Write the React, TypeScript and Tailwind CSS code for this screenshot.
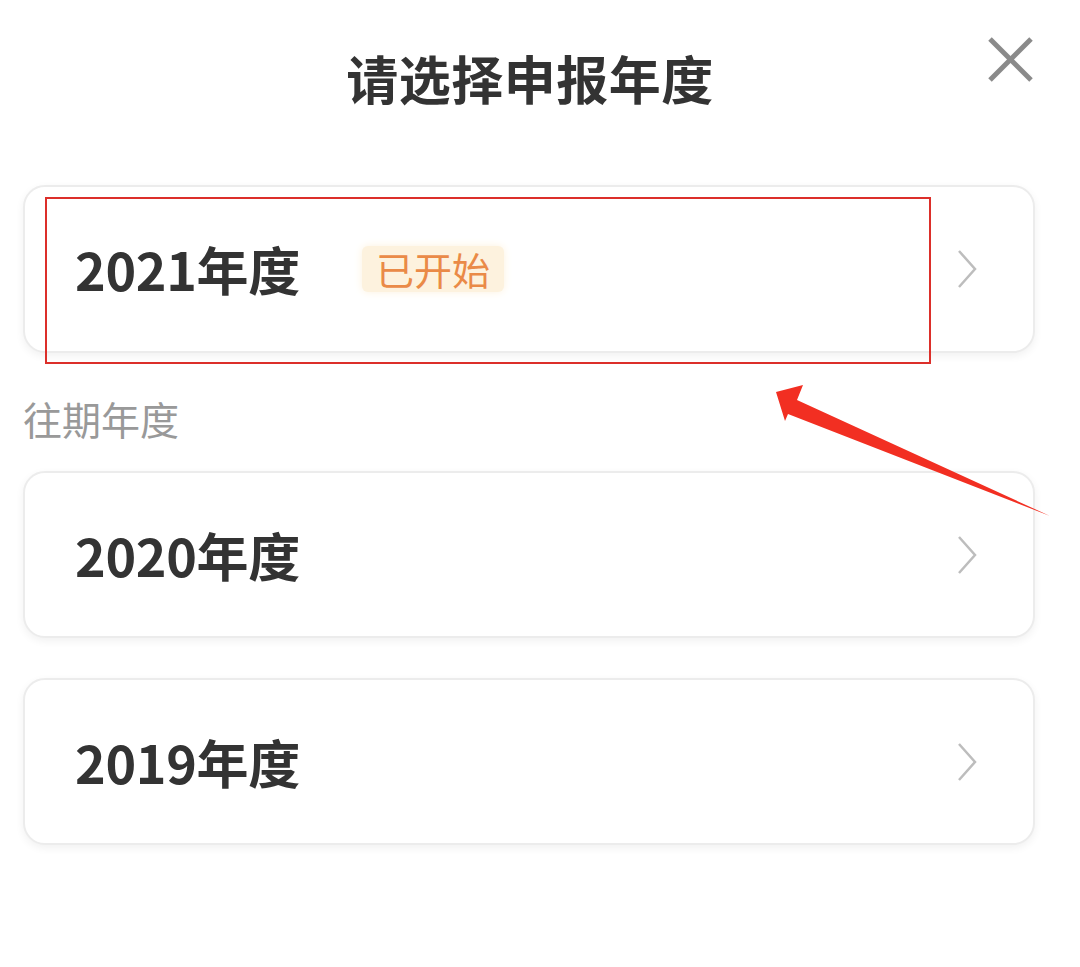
import React from "react";

const years = ["2020", "2019"];

function Chevron() {
  return (
    <svg width="20" height="40" viewBox="0 0 20 40" fill="none">
      <polyline points="2,2 18,20 2,38" stroke="#bdbdbd" strokeWidth="2.5" strokeLinejoin="miter" />
    </svg>
  );
}

function YearCard({ year, started, h }: { year: string; started?: boolean; h: string }) {
  return (
    <div
      className={`flex items-center justify-between w-[1012px] ${h} rounded-[22px] border-2 border-[#ececec] bg-white shadow-[0_3px_8px_rgba(0,0,0,0.06)] pl-[50px] pr-[56px]`}
    >
      <div className="flex items-center">
        <span className="text-[52px] leading-none font-bold text-[#333333] tracking-[-0.3px]">{year}年度</span>
        {started && (
          <span className="ml-[62px] h-[46px] px-[14px] flex items-center rounded-[6px] bg-[#fdf2de] text-[#ea8a47] text-[38px] leading-none shadow-[0_0_8px_#fdf2de]">
            已开始
          </span>
        )}
      </div>
      <Chevron />
    </div>
  );
}

export default function App() {
  return (
    <div className="relative w-[1080px] h-[967px] bg-white font-['Noto_Sans_CJK_SC',sans-serif] overflow-hidden">
      <div className="relative h-[156px] flex items-center justify-center pr-[20px]">
        <h1 className="text-[52px] leading-none font-bold text-[#333333] tracking-[0.5px]">请选择申报年度</h1>
        <svg className="absolute left-[986px] top-[36px]" width="48" height="48" viewBox="0 0 48 48">
          <line x1="4" y1="3" x2="45" y2="44" stroke="#8a8a8a" strokeWidth="5" />
          <line x1="45" y1="3" x2="4" y2="44" stroke="#8a8a8a" strokeWidth="5" />
        </svg>
      </div>

      <div className="flex flex-col pl-[23px]">
        <div className="mt-[29px]">
          <YearCard year="2021" started h="h-[168px]" />
        </div>
        <div className="mt-[45px] h-[40px] text-[39px] leading-[40px] text-[#999999]">往期年度</div>
        <div className="mt-[33px] flex flex-col gap-[40px]">
          {years.map((y) => (
            <YearCard key={y} year={y} h="h-[167px]" />
          ))}
        </div>
      </div>

      {/* annotation */}
      <div className="absolute left-[45px] top-[197px] w-[886px] h-[167px] border-[2.5px] border-[#dc2f2a]" />
      <svg className="absolute left-0 top-0 pointer-events-none" width="1080" height="967" viewBox="0 0 1080 967">
        <polygon
          points="776,392 803,385 797,400 1050,516 788,414 785,421"
          fill="#f22f22"
        />
      </svg>
    </div>
  );
}
